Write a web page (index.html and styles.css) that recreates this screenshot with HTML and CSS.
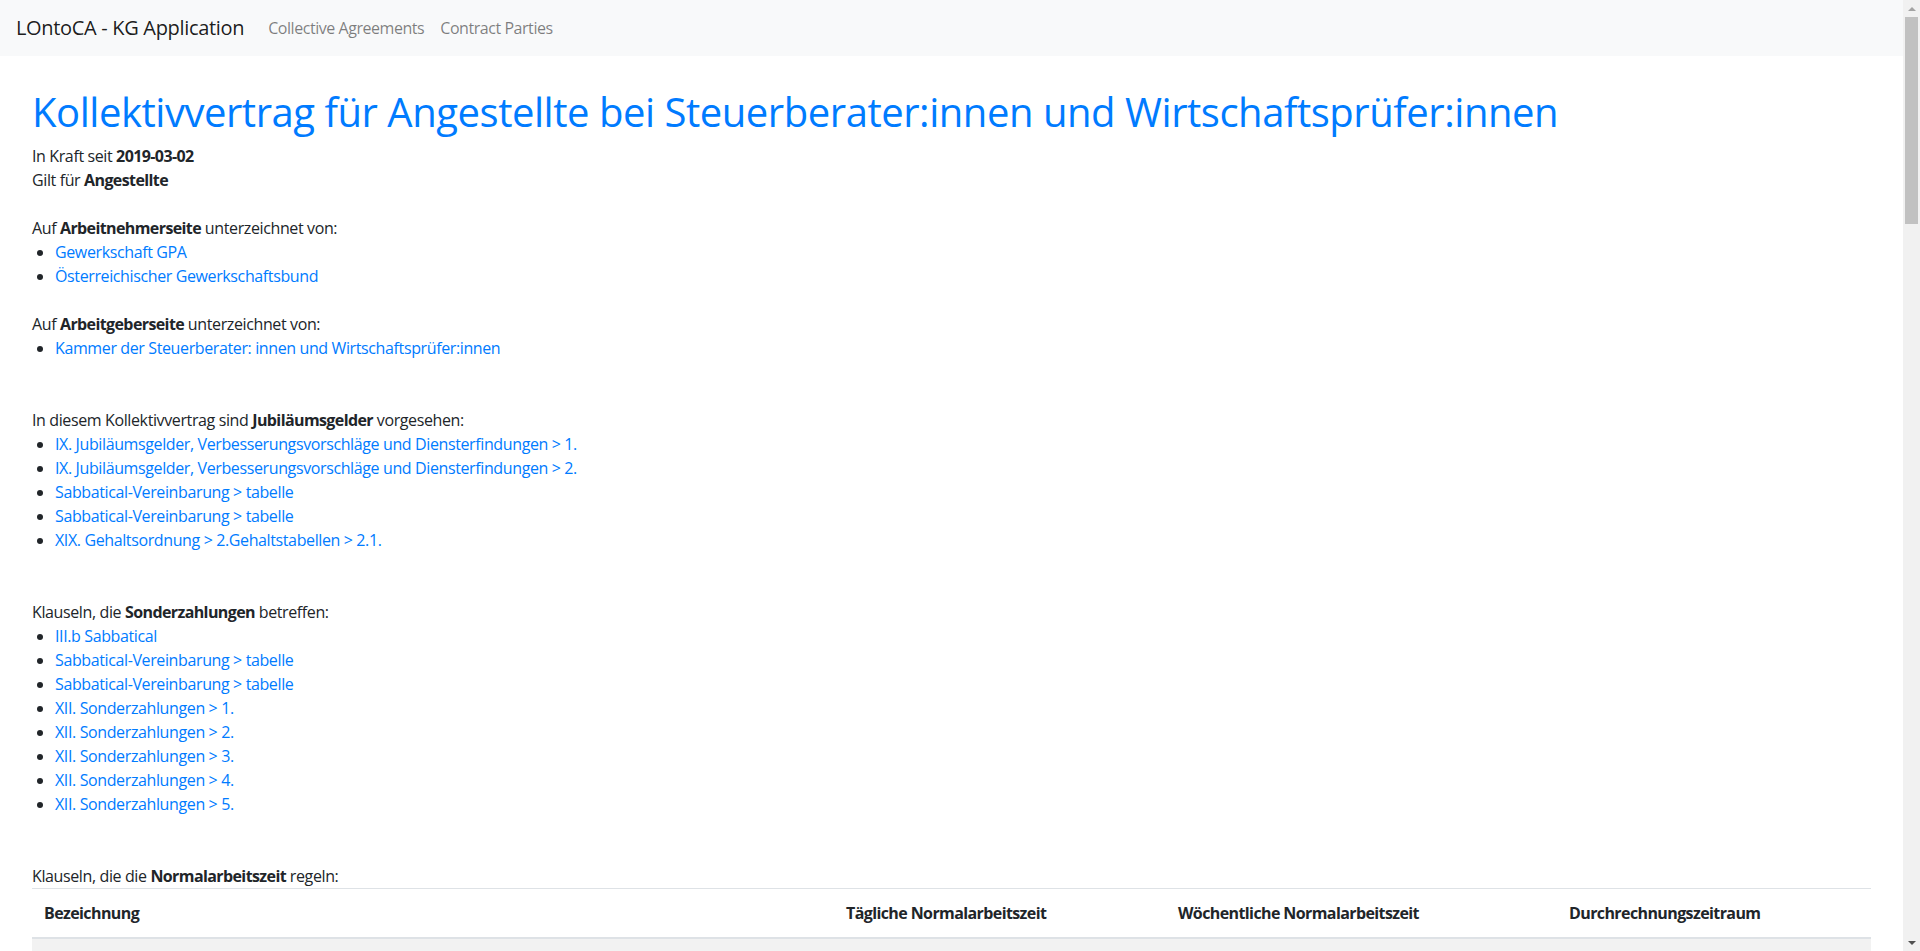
FILE: index.html
```html
<!DOCTYPE html>
<html lang="de">
<head>
<meta charset="utf-8">
<title>LOntoCA - KG Application</title>
<link rel="stylesheet" href="styles.css">
</head>
<body>
<div class="app">
  <nav class="navbar">
    <a class="brand" href="#">LOntoCA - KG Application</a>
    <ul class="nav">
      <li><a class="nav-link" href="#">Collective Agreements</a></li>
      <li><a class="nav-link" href="#">Contract Parties</a></li>
    </ul>
  </nav>
  <main class="content">
    <h1 class="title">Kollektivvertrag für Angestellte bei Steuerberater:innen und Wirtschaftsprüfer:innen</h1>
    <p class="meta">In Kraft seit <b>2019-03-02</b><br>Gilt für <b>Angestellte</b></p>

    <section class="section">
      <p class="lead-line">Auf <b>Arbeitnehmerseite</b> unterzeichnet von:</p>
      <ul class="links">
        <li><a href="#">Gewerkschaft GPA</a></li>
        <li><a href="#">Österreichischer Gewerkschaftsbund</a></li>
      </ul>
    </section>

    <section class="section">
      <p class="lead-line">Auf <b>Arbeitgeberseite</b> unterzeichnet von:</p>
      <ul class="links">
        <li><a href="#">Kammer der Steuerberater: innen und Wirtschaftsprüfer:innen</a></li>
      </ul>
    </section>

    <section class="section wide">
      <p class="lead-line">In diesem Kollektivvertrag sind <b>Jubiläumsgelder</b> vorgesehen:</p>
      <ul class="links">
        <li><a href="#">IX. Jubiläumsgelder, Verbesserungsvorschläge und Diensterfindungen &gt; 1.</a></li>
        <li><a href="#">IX. Jubiläumsgelder, Verbesserungsvorschläge und Diensterfindungen &gt; 2.</a></li>
        <li><a href="#">Sabbatical-Vereinbarung &gt; tabelle</a></li>
        <li><a href="#">Sabbatical-Vereinbarung &gt; tabelle</a></li>
        <li><a href="#">XIX. Gehaltsordnung &gt; 2.Gehaltstabellen &gt; 2.1.</a></li>
      </ul>
    </section>

    <section class="section wide">
      <p class="lead-line">Klauseln, die <b>Sonderzahlungen</b> betreffen:</p>
      <ul class="links">
        <li><a href="#">III.b Sabbatical</a></li>
        <li><a href="#">Sabbatical-Vereinbarung &gt; tabelle</a></li>
        <li><a href="#">Sabbatical-Vereinbarung &gt; tabelle</a></li>
        <li><a href="#">XII. Sonderzahlungen &gt; 1.</a></li>
        <li><a href="#">XII. Sonderzahlungen &gt; 2.</a></li>
        <li><a href="#">XII. Sonderzahlungen &gt; 3.</a></li>
        <li><a href="#">XII. Sonderzahlungen &gt; 4.</a></li>
        <li><a href="#">XII. Sonderzahlungen &gt; 5.</a></li>
      </ul>
    </section>

    <section class="section wide">
      <p class="lead-line">Klauseln, die die <b>Normalarbeitszeit</b> regeln:</p>
      <table class="table">
        <colgroup>
          <col class="c1"><col class="c2"><col class="c3"><col class="c4">
        </colgroup>
        <thead>
          <tr>
            <th>Bezeichnung</th>
            <th>Tägliche Normalarbeitszeit</th>
            <th>Wöchentliche Normalarbeitszeit</th>
            <th>Durchrechnungszeitraum</th>
          </tr>
        </thead>
        <tbody>
          <tr><td><a href="#">IV. Arbeitszeit &gt; 1.</a></td><td>8 h</td><td>40 h</td><td>-</td></tr>
          <tr><td><a href="#">IV. Arbeitszeit &gt; 2.</a></td><td>-</td><td>40 h</td><td>13 Wochen</td></tr>
        </tbody>
      </table>
    </section>
  </main>
</div>
<div class="scrollbar" aria-hidden="true">
  <div class="sb-btn"><span class="arrow-up"></span></div>
  <div class="sb-track"><div class="sb-thumb"></div></div>
  <div class="sb-btn"><span class="arrow-down"></span></div>
</div>
</body>
</html>
```
FILE: styles.css
```css
html,
body {
  height: 100%;
}
body {
  margin: 0;
  display: flex;
  overflow: hidden;
  font-family: "Open Sans", "Noto Sans", "DejaVu Sans", sans-serif;
  font-size: 16px;
  line-height: 1.5;
  letter-spacing: -0.38px;
  color: #212529;
  background: #fff;
}
.app {
  flex: 1 1 auto;
  min-width: 0;
  height: 100%;
  overflow: hidden;
}
.scrollbar {
  flex: 0 0 17px;
  height: 100%;
  display: flex;
  flex-direction: column;
  background: #f1f1f1;
}
.sb-btn {
  flex: 0 0 17px;
  display: flex;
  justify-content: center;
  align-items: center;
}
.arrow-up {
  width: 0;
  height: 0;
  border-left: 4px solid transparent;
  border-right: 4px solid transparent;
  border-bottom: 4px solid #a3a3a3;
}
.arrow-down {
  width: 0;
  height: 0;
  border-left: 4px solid transparent;
  border-right: 4px solid transparent;
  border-top: 4px solid #505050;
}
.sb-track {
  flex: 1 1 auto;
}
.sb-thumb {
  height: 207px;
  margin: 0 2px;
  background: #c1c1c1;
}
a {
  color: #007bff;
  text-decoration: none;
}
b {
  font-weight: 700;
  letter-spacing: -0.6px;
}
.navbar {
  display: flex;
  align-items: center;
  height: 56px;
  box-sizing: border-box;
  padding: 8px 16px;
  background: #f8f9fa;
}
.brand {
  font-size: 20px;
  line-height: 30px;
  padding: 5px 0;
  margin-right: 16px;
  letter-spacing: -0.32px;
  color: rgba(0, 0, 0, 0.9);
  white-space: nowrap;
}
.nav {
  display: flex;
  list-style: none;
  margin: 0;
  padding: 0;
}
.nav-link {
  display: block;
  padding: 8px;
  letter-spacing: -0.45px;
  color: rgba(0, 0, 0, 0.5);
}
.content {
  padding: 32px;
}
.title {
  margin: 0 0 8px;
  font-size: 40px;
  font-weight: 400;
  line-height: 1.2;
  letter-spacing: -0.46px;
  color: #007bff;
}
.meta {
  margin: 0;
}
.section {
  margin-top: 24px;
}
.section.wide {
  margin-top: 48px;
}
.lead-line {
  margin: 0;
}
.links {
  margin: 0;
  padding-left: 23px;
}
.table {
  width: 100%;
  table-layout: fixed;
  border-collapse: collapse;
  color: #212529;
}
.c1 { width: 802px; }
.c2 { width: 332px; }
.c3 { width: 391px; }
.c4 { width: 314px; }
.table th,
.table td {
  padding: 12px;
  text-align: left;
  vertical-align: top;
  border-top: 1px solid #dee2e6;
}
.table th {
  vertical-align: bottom;
  font-weight: 700;
  letter-spacing: -0.6px;
  border-bottom: 2px solid #dee2e6;
}
.table tbody tr:nth-of-type(odd) {
  background: rgba(0, 0, 0, 0.05);
}
```
